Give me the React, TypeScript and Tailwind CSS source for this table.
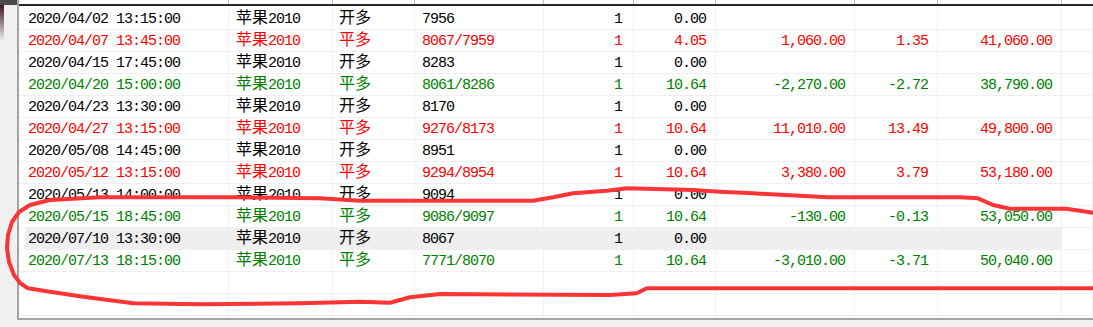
type Tone = 'black' | 'red' | 'green';

type Trade = {
  time: string;
  side: string;
  price: string;
  fee: string;
  pnl?: string;
  pct?: string;
  equity?: string;
  tone: Tone;
  selected?: boolean;
};

const trades: Trade[] = [
  { time: '2020/04/02 13:15:00', side: '开多', price: '7956', fee: '0.00', tone: 'black' },
  { time: '2020/04/07 13:45:00', side: '平多', price: '8067/7959', fee: '4.05', pnl: '1,060.00', pct: '1.35', equity: '41,060.00', tone: 'red' },
  { time: '2020/04/15 17:45:00', side: '开多', price: '8283', fee: '0.00', tone: 'black' },
  { time: '2020/04/20 15:00:00', side: '平多', price: '8061/8286', fee: '10.64', pnl: '-2,270.00', pct: '-2.72', equity: '38,790.00', tone: 'green' },
  { time: '2020/04/23 13:30:00', side: '开多', price: '8170', fee: '0.00', tone: 'black' },
  { time: '2020/04/27 13:15:00', side: '平多', price: '9276/8173', fee: '10.64', pnl: '11,010.00', pct: '13.49', equity: '49,800.00', tone: 'red' },
  { time: '2020/05/08 14:45:00', side: '开多', price: '8951', fee: '0.00', tone: 'black' },
  { time: '2020/05/12 13:15:00', side: '平多', price: '9294/8954', fee: '10.64', pnl: '3,380.00', pct: '3.79', equity: '53,180.00', tone: 'red' },
  { time: '2020/05/13 14:00:00', side: '开多', price: '9094', fee: '0.00', tone: 'black' },
  { time: '2020/05/15 18:45:00', side: '平多', price: '9086/9097', fee: '10.64', pnl: '-130.00', pct: '-0.13', equity: '53,050.00', tone: 'green' },
  { time: '2020/07/10 13:30:00', side: '开多', price: '8067', fee: '0.00', tone: 'black', selected: true },
  { time: '2020/07/13 18:15:00', side: '平多', price: '7771/8070', fee: '10.64', pnl: '-3,010.00', pct: '-3.71', equity: '50,040.00', tone: 'green' },
];

const toneClass: Record<Tone, string> = {
  black: 'text-black',
  red: 'text-[#ff0000]',
  green: 'text-[#008000]',
};

// column widths include the 1px grid line on the right
const colW = ['w-[210px]', 'w-[104px]', 'w-[82px]', 'w-[129px]', 'w-[90px]', 'w-[82px]', 'w-[139px]', 'w-[83px]', 'w-[124px]'];

const cell = 'h-full shrink-0 whitespace-nowrap border-r border-[#f0f0f0] leading-[24px]';

function Cjk({ children }: { children: string }) {
  return <span className="font-['Noto_Sans_CJK_SC',sans-serif] text-[16px] leading-[0px] tracking-normal">{children}</span>;
}

function Row({ t }: { t?: Trade }) {
  const sel = t?.selected;
  const hl = sel ? 'bg-[#efefef]' : '';
  return (
    <div className={`flex h-[22px] border-b border-[#f0f0f0] ${t ? toneClass[t.tone] : ''}`}>
      <div className={`${cell} w-[210px] pl-[9px] ${sel ? 'bg-[linear-gradient(to_right,white_6px,#efefef_6px)]' : ''}`}>{t?.time}</div>
      <div className={`${cell} w-[104px] pl-[7px] ${hl}`}>
        {t && (
          <>
            <Cjk>苹果</Cjk>2010
          </>
        )}
      </div>
      <div className={`${cell} w-[82px] pl-[6px] ${hl}`}>{t && <Cjk>{t.side}</Cjk>}</div>
      <div className={`${cell} w-[129px] pl-[7px] ${hl}`}>{t?.price}</div>
      <div className={`${cell} w-[90px] pr-[11px] text-right ${hl}`}>{t && '1'}</div>
      <div className={`${cell} w-[82px] pr-[9px] text-right ${hl}`}>{t?.fee}</div>
      <div className={`${cell} w-[139px] pr-[9px] text-right ${hl}`}>{t?.pnl}</div>
      <div className={`${cell} w-[83px] pr-[9px] text-right ${hl}`}>{t?.pct}</div>
      <div className={`${cell} w-[124px] pr-[9px] text-right ${hl}`}>{t?.equity}</div>
      <div className={`${cell} flex-1`} />
    </div>
  );
}

// freehand marker stroke drawn over the list
const mark =
  'M1093 212.7 L1080 210.7 L1066 208.7 L1010 208.7 L993 205 L978 198.3 L960 197.3 L828 197.3 L753 193.3 L720 191.7 L693 190 L627 188.3 L607 190.7 L573 193.3 L553 197.3 L533 200.7 L360 200.7 L320 198.3 L233 197.3 L100 197.3 L50 200 L30 205 L19 212 L12 222 L8 235 L7 248 L9 262 L14 275 L20 283 L28 288.3 L50 291.7 L83.3 296.7 L133.3 303.3 L200 304.3 L300 303.3 L360 301.7 L390 302.7 L410 297.3 L440 294 L610 295 L636.7 293.3 L646.7 288.3 L1093 288.3';

export default function App() {
  return (
    <div className="relative flex h-[327px] w-[1093px] overflow-hidden bg-[#f0f0f0] font-['Liberation_Mono','Noto_Sans_CJK_SC',monospace] text-[15px] tracking-[-1px]">
      {/* left frame strip */}
      <div className="flex w-[17px] shrink-0 flex-col">
        <div className="h-[5px] bg-[#4a4a4a]" />
        <div className="flex">
          <div className="h-[36px] w-[4px] bg-[linear-gradient(to_bottom,#3c1a1a,#f0f0f0)]" />
        </div>
      </div>

      {/* list view */}
      <div className="flex h-[320px] flex-1 flex-col border-b-2 border-l-2 border-[#a3a3a3] bg-white">
        <div className="flex h-[4px]">
          {colW.map((w) => (
            <div key={w} className={`${w} h-full shrink-0 border-r border-[#bdbdbd]`} />
          ))}
        </div>
        <div className="h-[2px] bg-[#2a2a2a]" />
        <div className="h-[2px]" />
        {trades.map((t) => (
          <Row key={t.time} t={t} />
        ))}
        <Row />
        <Row />
      </div>

      <svg className="pointer-events-none absolute inset-0" width="1093" height="327" viewBox="0 0 1093 327">
        <path d={mark} fill="none" stroke="#fb3535" strokeWidth="4" strokeLinecap="round" strokeLinejoin="round" />
      </svg>
    </div>
  );
}
